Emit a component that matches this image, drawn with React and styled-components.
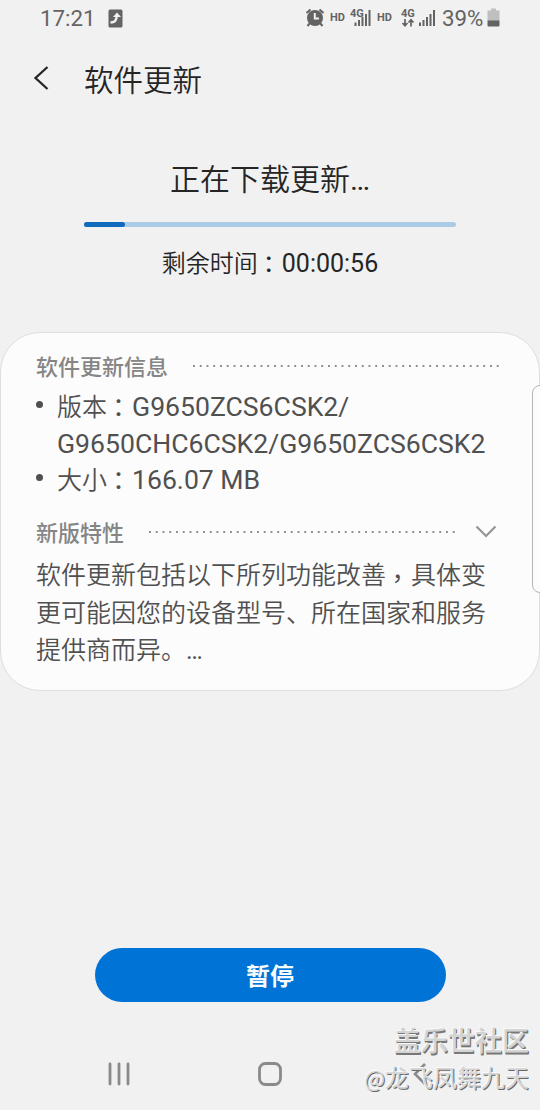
import React from 'react';
import styled, { createGlobalStyle } from 'styled-components';

const GlobalStyle = createGlobalStyle`
  * {
    box-sizing: border-box;
  }

  body {
    margin: 0;
    background: #f1f1f1;
  }

  h1, h2, h3, p, ul {
    margin: 0;
    padding: 0;
    font-weight: 400;
  }
`;

const Screen = styled.div`
  position: relative;
  display: flex;
  flex-direction: column;
  width: 540px;
  height: 1110px;
  overflow: hidden;
  background: #f1f1f1;
  font-family: Roboto, 'Noto Sans CJK SC', sans-serif;
  color: #252525;
`;

const StatusBar = styled.header`
  display: flex;
  align-items: center;
  height: 36px;
  padding: 0 40px;
  color: #636363;
`;

const Clock = styled.span`
  width: 68px;
  font-size: 22.3px;
  line-height: 36px;
`;

const StatusIcons = styled.div`
  display: flex;
  align-items: center;
  margin-left: auto;
`;

const Hd = styled.span`
  width: ${props => props.width}px;
  font-size: 11px;
  font-weight: 700;
  line-height: 34px;
`;

const Battery = styled.span`
  width: 45px;
  font-size: 22.3px;
  line-height: 36px;
`;

const TitleBar = styled.div`
  display: flex;
  align-items: center;
  height: 84px;
  padding-left: 33px;
`;

const Title = styled.h1`
  margin-left: 34px;
  font-family: 'Noto Sans CJK SC', sans-serif;
  font-size: 29.5px;
  font-weight: 350;
  line-height: 44px;
`;

const Progress = styled.section`
  display: flex;
  flex-direction: column;
  align-items: center;
  height: 212px;
  padding-top: 36px;
`;

const Heading = styled.h2`
  height: 46px;
  font-family: 'Noto Sans CJK SC', sans-serif;
  font-size: 30px;
  font-weight: 350;
  line-height: 43px;
`;

const Track = styled.div`
  width: 372px;
  height: 5px;
  margin-top: 20px;
  border-radius: 3px;
  background: #abcbe6;
`;

const Fill = styled.div`
  height: 100%;
  border-radius: 3px;
  background: #106bbd;
`;

const Remaining = styled.p`
  margin-top: 17px;
  font-family: 'Noto Sans CJK SC', sans-serif;
  font-size: 24px;
  font-weight: 350;
  line-height: 36px;
`;

const Latin = styled.span`
  font-family: Roboto, sans-serif;
  font-size: ${props => props.size || 25}px;
  font-weight: 400;
  line-height: 1;
`;

const Card = styled.section`
  height: 359px;
  padding: 16px 38px 0 35px;
  border: 1px solid #dedede;
  border-radius: 40px;
  background: #fcfcfc;
  color: #505050;
`;

const SectionHead = styled.div`
  display: flex;
  align-items: center;
  height: 34px;
  margin-top: ${props => props.top || 0}px;
`;

const SectionTitle = styled.h3`
  flex: none;
  width: ${props => props.width}px;
  padding-top: 3px;
  font-size: 22px;
  font-weight: 500;
  line-height: 34px;
  color: #858585;
`;

const Dots = styled.div`
  flex: none;
  width: 307px;
  height: 2px;
  background: linear-gradient(90deg, #8f8f8f 2px, transparent 2px) 0 0 / 6.75px 2px repeat-x;
`;

const Chevron = styled.svg`
  flex: none;
  margin-left: 19px;
`;

const List = styled.ul`
  margin-top: 4px;
  list-style: none;
`;

const Item = styled.li`
  display: flex;
  font-family: 'Noto Sans CJK SC', sans-serif;
  font-size: 25px;
  font-weight: 350;

  &::before {
    content: '';
    flex: none;
    width: 7px;
    height: 7px;
    margin: 14px 14px 0 0;
    border-radius: 50%;
    background: #505050;
  }
`;

const Line = styled.div`
  height: ${props => props.height || 37}px;
  line-height: 37px;
  white-space: nowrap;
`;

const Description = styled.p`
  margin-top: 6px;
  font-family: 'Noto Sans CJK SC', sans-serif;
  font-size: 25px;
  font-weight: 350;
  line-height: 37.5px;
  white-space: nowrap;
`;

// full-width marks sit in the middle of their cell
const Mark = styled.span`
  position: relative;
  top: ${props => props.drop || 0}px;
  left: -1px;
  font-family: 'Noto Sans CJK TC', sans-serif;
  font-weight: 400;
  line-height: 1;
`;

const PauseButton = styled.button`
  align-self: center;
  width: 351px;
  height: 54px;
  margin-top: 257px;
  padding: 0;
  border: 0;
  border-radius: 27px;
  background: #0073d6;
  color: #f8fcff;
  font-family: 'Noto Sans CJK SC', sans-serif;
  font-size: 24px;
  font-weight: 700;
  line-height: 54px;
`;

const NavBar = styled.nav`
  display: flex;
  align-items: center;
  justify-content: space-between;
  height: 72px;
  margin-top: auto;
  padding: 0 107px;
`;

const EdgeHandle = styled.div`
  position: absolute;
  top: 385px;
  right: -8px;
  width: 16px;
  height: 208px;
  border: 1px solid #b5b5b5;
  border-radius: 8px;
  background: #fcfcfc;
`;

const Watermark = styled.div`
  position: absolute;
  right: 11px;
  bottom: 16px;
  color: #d4d4d4;
  text-align: right;
  white-space: nowrap;
  text-shadow: -1px -1px 0 #fafafa, 1px 1px 0 #686868;
`;

const Community = styled.div`
  font-size: 27px;
  font-weight: 500;
  line-height: 36px;
  text-shadow: -1px -1px 0 #fafafa, 1px 1px 0 #787878, 1px 2px 0 #787878;
`;

const Author = styled.div`
  font-family: 'Noto Sans CJK SC', sans-serif;
  font-size: 24px;
  line-height: 33px;
`;

const At = styled.span`
  font-size: 22px;
`;

const Signal = ({ x }) => (
  <g fill="#636363">
    <rect x={x} y="22.5" width="2" height="3.5" />
    <rect x={x + 3.5} y="20" width="2" height="6" />
    <rect x={x + 7} y="17" width="2" height="9" />
    <rect x={x + 10.5} y="14" width="2" height="12" />
    <rect x={x + 14} y="10" width="2" height="16" />
  </g>
);

const UpdateIcon = () => (
  <svg width="15" height="19" viewBox="0 0 15 19">
    <rect x="0.5" y="0.5" width="14" height="18" rx="1.5" fill="#636363" />
    <path d="M2.5 13.5C7 13.5 8.7 11.5 8.7 7" fill="none" stroke="#f1f1f1" strokeWidth="2.4" />
    <path d="M5 8L9 3.5L13 8Z" fill="#f1f1f1" />
  </svg>
);

const AlarmIcon = () => (
  <svg width="25" height="36" viewBox="0 0 25 36">
    <circle cx="10" cy="18" r="8" fill="#636363" />
    <path d="M1.5 13L5.5 9.5M18.5 13L14.5 9.5M5 23L2.5 26M15 23L17.5 26" stroke="#636363" strokeWidth="2" />
    <path d="M9.8 13V18.5H14" fill="none" stroke="#f1f1f1" strokeWidth="2" />
  </svg>
);

const BatteryIcon = () => (
  <svg width="13" height="36" viewBox="0 0 13 36">
    <path d="M4 8.5H9V10.5H12.5V21H0.5V10.5H4Z" fill="#bfbfbf" />
    <path d="M0.5 20.5H12.5V25.5Q12.5 26.5 11.5 26.5H1.5Q0.5 26.5 0.5 25.5Z" fill="#636363" />
  </svg>
);

const App = () => (
  <Screen>
    <GlobalStyle />
    <StatusBar>
      <Clock>17:21</Clock>
      <UpdateIcon />
      <StatusIcons>
        <AlarmIcon />
        <Hd width={20}>HD</Hd>
        <svg width="27" height="36" viewBox="0 0 27 36">
          <text x="0" y="17" fontSize="11" fontWeight="700" fill="#636363">4G</text>
          <Signal x={4.5} />
        </svg>
        <Hd width={24}>HD</Hd>
        <svg width="41" height="36" viewBox="0 0 41 36">
          <text x="0" y="17" fontSize="11" fontWeight="700" fill="#636363">4G</text>
          <path d="M4 19V25.5M1.5 23L4 25.8L6.5 23M10 26.5V20M7.5 22.5L10 19.7L12.5 22.5" fill="none" stroke="#636363" strokeWidth="1.7" />
          <Signal x={18} />
        </svg>
        <Battery>39%</Battery>
        <BatteryIcon />
      </StatusIcons>
    </StatusBar>

    <TitleBar>
      <svg width="17" height="28" viewBox="0 0 17 28">
        <path d="M14.5 3L2.5 14L14.5 25" fill="none" stroke="#252525" strokeWidth="2.3" />
      </svg>
      <Title>软件更新</Title>
    </TitleBar>

    <Progress>
      <Heading>正在下载更新<Latin size={30}>…</Latin></Heading>
      <Track>
        <Fill style={{ width: `${(41 / 372) * 100}%` }} />
      </Track>
      <Remaining>
        剩余时间<Mark drop={1}>：</Mark><Latin>00:00:56</Latin>
      </Remaining>
    </Progress>

    <Card>
      <SectionHead>
        <SectionTitle width={157}>软件更新信息</SectionTitle>
        <Dots />
      </SectionHead>
      <List>
        <Item>
          <div>
            <Line>版本<Mark drop={1}>：</Mark><Latin size={26.6}>G9650ZCS6CSK2/</Latin></Line>
            <Line height={36}><Latin size={26.6}>G9650CHC6CSK2/G9650ZCS6CSK2</Latin></Line>
          </div>
        </Item>
        <Item>
          <Line>大小<Mark drop={1}>：</Mark><Latin size={26.6}>166.07 MB</Latin></Line>
        </Item>
      </List>
      <SectionHead top={18}>
        <SectionTitle width={113}>新版特性</SectionTitle>
        <Dots />
        <Chevron width="22" height="14" viewBox="0 0 22 14">
          <path d="M1.5 1.5L11 11L20.5 1.5" fill="none" stroke="#959595" strokeWidth="2.2" />
        </Chevron>
      </SectionHead>
      <Description>
        软件更新包括以下所列功能改善<Mark drop={4}>，</Mark>具体变<br />
        更可能因您的设备型号、所在国家和服务<br />
        提供商而异。<Latin>…</Latin>
      </Description>
    </Card>

    <PauseButton>暂停</PauseButton>

    <NavBar>
      <svg width="24" height="24" viewBox="0 0 24 24">
        <path d="M3 2V22M12 2V22M21 2V22" stroke="#8a8a8a" strokeWidth="2.8" strokeLinecap="round" />
      </svg>
      <svg width="26" height="26" viewBox="0 0 26 26">
        <rect x="2.5" y="2.5" width="21" height="21" rx="6" fill="none" stroke="#8a8a8a" strokeWidth="2.8" />
      </svg>
      <svg width="24" height="24" viewBox="0 0 24 24">
        <path d="M16 2L6 12L16 22" fill="none" stroke="#8a8a8a" strokeWidth="2.6" />
      </svg>
    </NavBar>

    <EdgeHandle />
    <Watermark>
      <Community>盖乐世社区</Community>
      <Author><At>@</At>龙飞凤舞九天</Author>
    </Watermark>
  </Screen>
);

export default App;
